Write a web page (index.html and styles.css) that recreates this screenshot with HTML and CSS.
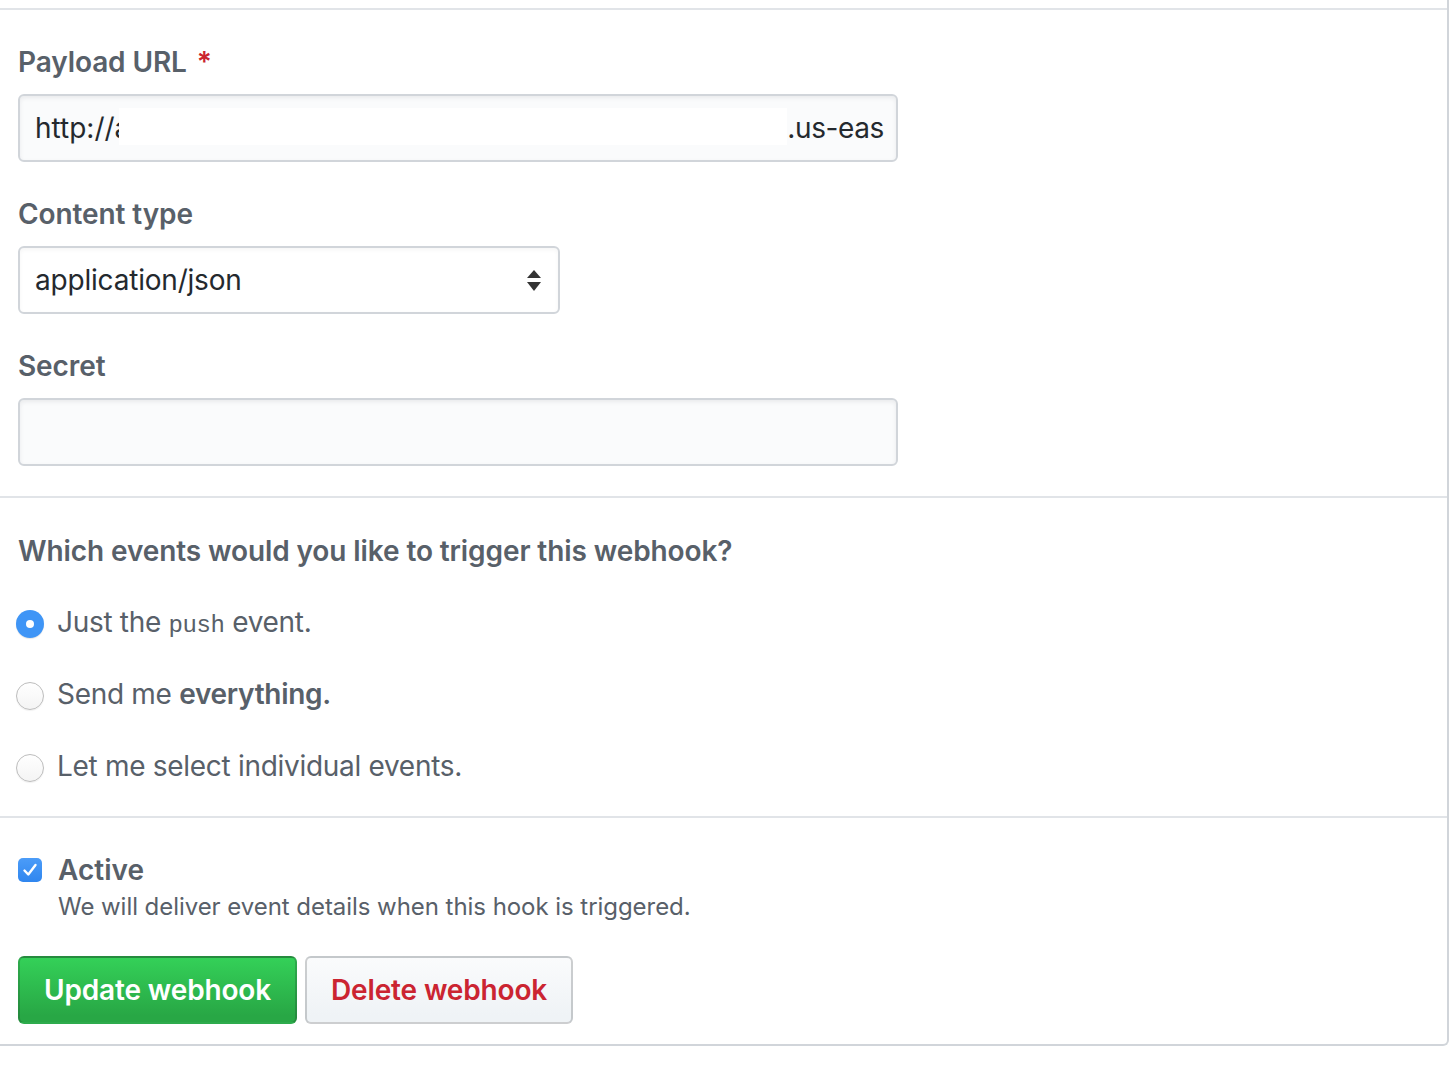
FILE: index.html
```html
<!DOCTYPE html>
<html lang="en">
<head>
<meta charset="utf-8">
<title>Webhook settings</title>
<link rel="stylesheet" href="styles.css">
</head>
<body>
<div class="box">
  <div class="box-top"></div>

  <section class="section fields">
    <div class="form-group">
      <div class="label">Payload URL <span class="required">*</span></div>
      <div class="input">
        <span class="val">http://a</span><span class="redact"></span><span class="val tail">.us-eas</span>
      </div>
    </div>
    <div class="form-group">
      <div class="label">Content type</div>
      <div class="select">
        <span class="val">application/json</span>
        <svg class="arrows" width="14" height="22" viewBox="0 0 14 22"><polygon points="7,0 14,8 0,8" fill="#333"/><polygon points="0,12 14,12 7,21" fill="#333"/></svg>
      </div>
    </div>
    <div class="form-group">
      <div class="label">Secret</div>
      <div class="input"></div>
    </div>
  </section>

  <section class="section events">
    <div class="heading">Which events would you like to trigger this webhook?</div>
    <div class="radio-row">
      <span class="radio checked"><span class="dot"></span></span>
      <span class="radio-label">Just the <code>push</code> event.</span>
    </div>
    <div class="radio-row">
      <span class="radio"></span>
      <span class="radio-label">Send me <strong>everything.</strong></span>
    </div>
    <div class="radio-row">
      <span class="radio"></span>
      <span class="radio-label">Let me select individual events.</span>
    </div>
  </section>

  <section class="section active">
    <div class="check-row">
      <span class="checkbox"><svg width="24" height="24" viewBox="0 0 24 24"><path d="M6.5 12.5 L10.3 16.5 L17.5 7" fill="none" stroke="#fff" stroke-width="2.4" stroke-linecap="round" stroke-linejoin="round"/></svg></span>
      <div class="check-text">
        <div class="check-label">Active</div>
        <div class="note">We will deliver event details when this hook is triggered.</div>
      </div>
    </div>
    <div class="actions">
      <button class="btn btn-primary">Update webhook</button>
      <button class="btn btn-danger">Delete webhook</button>
    </div>
  </section>
</div>
</body>
</html>
```

FILE: styles.css
```css
html, body {
  margin: 0;
  padding: 0;
  background: #fff;
}

body {
  font-family: Inter, "Liberation Sans", sans-serif;
  color: #586069;
  font-size: 28px;
}

.box {
  width: 1447px;
  border-right: 2px solid #d1d5da;
  border-bottom: 2px solid #d1d5da;
  border-bottom-right-radius: 6px;
}

.box-top {
  height: 8px;
}

.section {
  border-top: 2px solid #e1e4e8;
}

.fields {
  padding: 31px 0 30px 18px;
}

.form-group + .form-group {
  margin-top: 31px;
}

.label {
  font-weight: 600;
  line-height: 42px;
  margin-bottom: 11px;
  color: #586069;
  letter-spacing: -0.1px;
}

.required {
  color: #cb2431;
  margin-left: 3px;
}

.input {
  box-sizing: border-box;
  width: 880px;
  height: 68px;
  border: 2px solid #d1d5da;
  border-radius: 6px;
  background: #fafbfc;
  box-shadow: inset 0 2px 4px rgba(27, 31, 35, 0.075);
  display: flex;
  align-items: center;
  padding: 0 14px 0 15px;
  overflow: hidden;
  white-space: nowrap;
  color: #24292e;
}

.val {
  color: #24292e;
}

.tail {
  letter-spacing: -0.4px;
}

.redact {
  display: inline-block;
  width: 668px;
  height: 37px;
  margin-left: -11px;
  margin-bottom: 3px;
  background: #fff;
  flex: none;
}

.select {
  box-sizing: border-box;
  width: 542px;
  height: 68px;
  border: 2px solid #d1d5da;
  border-radius: 6px;
  background: #fff;
  box-shadow: inset 0 2px 4px rgba(27, 31, 35, 0.04);
  display: flex;
  align-items: center;
  justify-content: space-between;
  padding: 0 17px 0 15px;
}

.select .val {
  letter-spacing: -0.2px;
}

.arrows {
  display: block;
  margin-top: 1px;
}

.events {
  padding: 32px 0 29px 16px;
}

.heading {
  font-weight: 600;
  line-height: 42px;
  margin: 0 0 29px 2px;
  letter-spacing: -0.1px;
}

.radio-row {
  display: flex;
  align-items: flex-start;
  line-height: 42px;
  height: 42px;
}

.radio-row + .radio-row {
  margin-top: 30px;
}

.radio-label {
  letter-spacing: -0.3px;
}

.radio {
  box-sizing: border-box;
  width: 28px;
  height: 28px;
  margin-top: 9px;
  margin-right: 13px;
  border-radius: 50%;
  border: 1.5px solid #bdbdbd;
  background: linear-gradient(#ffffff, #f4f4f4);
  box-shadow: 0 1px 1px rgba(0, 0, 0, 0.06);
  display: flex;
  align-items: center;
  justify-content: center;
  flex: none;
}

.radio.checked {
  border: none;
  background: #3f95f6;
  box-shadow: 0 1px 1px rgba(0, 0, 0, 0.1);
}

.dot {
  width: 8px;
  height: 8px;
  border-radius: 50%;
  background: #fff;
}

.radio-label code {
  font-family: "Liberation Mono", "DejaVu Sans Mono", monospace;
  font-size: 24px;
  line-height: 1;
  letter-spacing: -0.4px;
  color: #586069;
}

.radio-label strong {
  font-weight: 600;
}

.active {
  padding: 32px 0 20px 18px;
}

.check-row {
  display: flex;
  align-items: flex-start;
}

.checkbox {
  width: 24px;
  height: 24px;
  margin-top: 8px;
  margin-right: 16px;
  border-radius: 5px;
  background: linear-gradient(#4b9cf8, #3086ef);
  flex: none;
}

.checkbox svg {
  display: block;
}

.check-label {
  font-weight: 600;
  line-height: 40px;
}

.note {
  font-size: 24px;
  line-height: 34px;
  color: #586069;
  letter-spacing: -0.05px;
}

.actions {
  margin-top: 32px;
  display: flex;
  gap: 8px;
}

.btn {
  box-sizing: border-box;
  height: 68px;
  padding: 0 24px;
  border: 2px solid rgba(27, 31, 35, 0.2);
  border-radius: 6px;
  font-family: Inter, "Liberation Sans", sans-serif;
  font-size: 28px;
  font-weight: 600;
  letter-spacing: -0.15px;
  cursor: pointer;
}

.btn-primary {
  color: #fff;
  background: linear-gradient(180deg, #34d058 0%, #28a745 90%);
}

.btn-danger {
  color: #cb2431;
  background: linear-gradient(180deg, #fafbfc 0%, #eff3f6 90%);
}
```
